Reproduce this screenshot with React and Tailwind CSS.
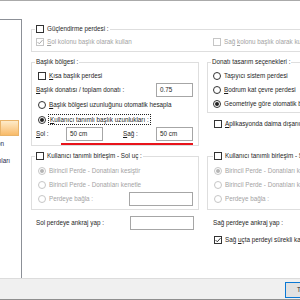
import React from 'react';

const Check = ({ checked = false, disabled = false }) => (
  <span
    className={
      disabled
        ? 'w-[8px] h-[8px] shrink-0 border border-[#c6c6c6] bg-white flex items-center justify-center'
        : 'w-[8px] h-[8px] shrink-0 border border-[#333333] bg-white flex items-center justify-center'
    }
  >
    {checked && (
      <svg viewBox="0 0 6 6" className="w-[6px] h-[6px]">
        <path d="M0.6 3.1 L2.3 4.8 L5.5 1.1" fill="none" stroke={disabled ? '#a9a9a9' : '#333333'} strokeWidth="1" />
      </svg>
    )}
  </span>
);

const Radio = ({ checked = false, disabled = false }) => (
  <span
    className={
      disabled
        ? 'w-[8px] h-[8px] shrink-0 rounded-full border border-[#c6c6c6] bg-white flex items-center justify-center'
        : 'w-[8px] h-[8px] shrink-0 rounded-full border border-[#333333] bg-white flex items-center justify-center'
    }
  >
    {checked && (
      <span className={disabled ? 'w-[4px] h-[4px] rounded-full bg-[#b4b4b4]' : 'w-[4px] h-[4px] rounded-full bg-[#222222]'} />
    )}
  </span>
);

const Opt = ({ radio = false, checked = false, disabled = false, className = '', children }) => (
  <div className={`flex items-center gap-[3px] whitespace-nowrap ${className}`}>
    {radio ? <Radio checked={checked} disabled={disabled} /> : <Check checked={checked} disabled={disabled} />}
    <span className={disabled ? 'text-[#a3a3a3]' : ''}>{children}</span>
  </div>
);

const Field = ({ value = '', className = '' }) => (
  <div className={`h-[14px] shrink-0 border border-[#a6a6a6] bg-white flex items-center px-[3px] ${className}`}>{value}</div>
);

const Group = ({ legend, legendClass = '', className = '', children }) => (
  <fieldset className={`min-w-0 border border-[#dedede] px-[3px] ${className}`}>
    <legend className={`px-[1px] leading-none ${legendClass}`}>
      <span className="h-[10px] flex items-center gap-[3px] whitespace-nowrap">{legend}</span>
    </legend>
    {children}
  </fieldset>
);

export default function App() {
  return (
    <div className="w-[300px] h-[300px] overflow-hidden bg-white flex flex-col border-t border-[#aaaaaa] text-[6.3px] text-[#1e1e1e] font-['Liberation_Sans',Arial,sans-serif]">
      <div className="h-[277px] shrink-0 flex overflow-hidden">
        {/* sol liste */}
        <div className="w-[22px] shrink-0 mt-[18px] border-t border-r border-[#8c9097] pt-[4px] flex flex-col overflow-hidden text-[#1b2748]">
          <div className="h-[16px] mr-[2px]" />
          <div className="h-[16px] mr-[2px]" />
          <div className="h-[16px] mr-[2px]" />
          <div className="h-[16px] mr-[2px]" />
          <div className="h-[16px] mr-[2px]" />
          <div className="h-[16px] mr-[2px]" />
          <div className="h-[16px] mr-[2px] border border-[#e9b46a] bg-linear-to-b from-[#feebc8] to-[#f8bb68]" />
          <div className="h-[16px] mr-[2px] flex items-center justify-end whitespace-nowrap pr-[15px]">Kolon</div>
          <div className="h-[18px] mr-[2px] flex items-center justify-end whitespace-nowrap pr-[9px]">Donatıları</div>
        </div>

        {/* içerik */}
        <div className="w-[340px] shrink-0 pl-[9px] pt-[23px] flex flex-col">
          <Group
            className="pb-[4px]"
            legend={
              <>
                <Check />
                <span>Güçlendirme perdesi :</span>
              </>
            }
          >
            <div className="pt-[3px] h-[13px] flex items-center">
              <Opt checked disabled className="w-[178px] pl-[1px]">
                <u>S</u>ol kolonu başlık olarak kullan
              </Opt>
              <Opt disabled>
                Sağ <u>k</u>olonu başlık olarak kullan
              </Opt>
            </div>
          </Group>

          <div className="mt-[5px] grid grid-cols-[168px_164px] gap-x-[8px] gap-y-[5px] items-start">
            <Group legend={<span>Başlık bölgesi :</span>} className="pt-[2px]">
              <Opt className="h-[14px] pl-[3px]">
                <u>K</u>ısa başlık perdesi
              </Opt>
              <div className="h-[14px] flex items-center justify-between pl-[1px] pr-[2px]">
                <span>
                  <u>B</u>aşlık donatısı / toplam donatı :
                </span>
                <Field value="0.75" className="w-[37px]" />
              </div>
              <Opt radio className="h-[15px] pl-[3px]">
                <u>B</u>aşlık bölgesi uzunluğunu otomatik hesapla
              </Opt>
              <div className="h-[15px] flex items-center gap-[2px] pl-[3px] whitespace-nowrap">
                <Radio checked />
                <span className="border border-dotted border-[#222222] px-[1px] leading-[9px]">
                  <u>K</u>ullanıcı tanımlı başlık uzunlukları :
                </span>
              </div>
              <div className="h-[14px] flex items-center pl-[1px]">
                <span className="w-[30px]">
                  <u>S</u>ol :
                </span>
                <Field value="50 cm" className="w-[37px]" />
                <span className="ml-[20px] w-[33px]">
                  <u>S</u>ağ :
                </span>
                <Field value="50 cm" className="w-[37px]" />
              </div>
              <div className="mt-[2px] ml-[26px] w-[132px] h-[2px] bg-[#e8141b]" />
            </Group>

            <div className="flex flex-col">
              <Group legend={<span>Donatı tasarım seçenekleri :</span>} className="pt-[2px] pb-[1px]">
                <Opt radio className="h-[14px] pl-[2px]">
                  Taşıyıcı sistem perdesi
                </Opt>
                <Opt radio className="h-[14px] pl-[2px]">
                  <u>B</u>odrum kat çevre perdesi
                </Opt>
                <Opt radio checked className="h-[14px] pl-[2px]">
                  Geometriye göre otomatik belirle
                </Opt>
              </Group>
              <Opt className="mt-[4px] h-[14px] pl-[7px]">
                <u>A</u>plikasyonda daima dışarıda göster
              </Opt>
            </div>

            <Group
              className="pt-[3px] pb-[3px]"
              legend={
                <>
                  <Check />
                  <span>Kullanıcı tanımlı birleşim - Sol uç :</span>
                </>
              }
            >
              <Opt radio checked disabled className="h-[14px] pl-[3px]">
                Birincil Perde - Donatıları kesiştir
              </Opt>
              <Opt radio disabled className="h-[14px] pl-[3px]">
                Birincil Perde - Donatıları kenetle
              </Opt>
              <div className="h-[14px] flex items-center justify-between pl-[3px] pr-[2px]">
                <Opt radio disabled>Perdeye bağla :</Opt>
                <Field className="w-[64px]" />
              </div>
            </Group>

            <Group
              className="pt-[3px] pb-[3px]"
              legendClass="ml-[2px]"
              legend={
                <>
                  <Check />
                  <span>Kullanıcı tanımlı birleşim - Sağ uç :</span>
                </>
              }
            >
              <Opt radio checked disabled className="h-[14px] pl-[3px]">
                Birincil Perde - Donatıları kesiştir
              </Opt>
              <Opt radio disabled className="h-[14px] pl-[3px]">
                Birincil Perde - Donatıları kenetle
              </Opt>
              <div className="h-[14px] flex items-center pl-[3px]">
                <Opt radio disabled className="w-[96px]">
                  Perdeye bağla :
                </Opt>
                <Field className="w-[64px]" />
              </div>
            </Group>

            <div className="h-[16px] flex items-center justify-between pl-[5px] pr-[5px]">
              <span>Sol perdeye ankraj yap :</span>
              <Field className="w-[64px]" />
            </div>

            <div className="flex flex-col">
              <div className="h-[16px] flex items-center pl-[6px]">Sağ perdeye ankraj yap :</div>
              <Opt checked className="mt-[2px] h-[14px] pl-[7px]">
                Sağ <u>u</u>çta perdeyi sürekli kabul et
              </Opt>
            </div>
          </div>
        </div>
      </div>

      {/* alt düğme şeridi */}
      <div className="h-[22px] shrink-0 bg-[#f0f0f0] border-t border-[#dcdcdc] border-b border-b-[#8f8f8f] pl-[285px] pt-[3px] flex items-start">
        <div className="w-[60px] h-[16px] shrink-0 border border-[#0a78d4] bg-[#e1e1e1] flex items-center pl-[11px]">Tamam</div>
      </div>
    </div>
  );
}
